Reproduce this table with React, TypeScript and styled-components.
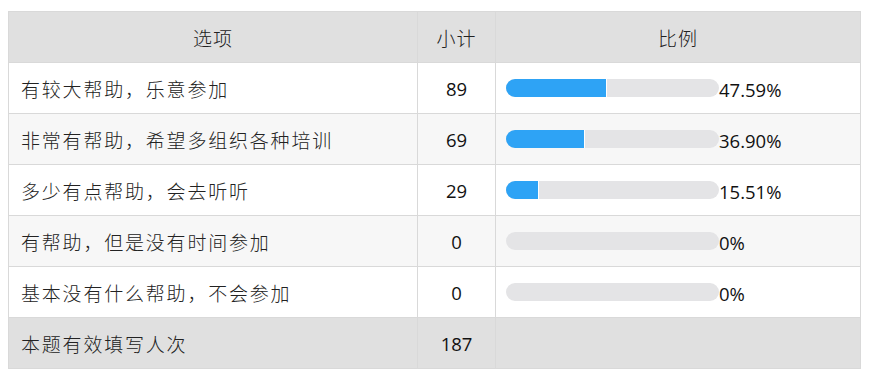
import styled, { createGlobalStyle } from 'styled-components';

const rows = [
  { label: '有较大帮助，乐意参加', count: 89, pct: '47.59%', value: 47.59 },
  { label: '非常有帮助，希望多组织各种培训', count: 69, pct: '36.90%', value: 36.9 },
  { label: '多少有点帮助，会去听听', count: 29, pct: '15.51%', value: 15.51 },
  { label: '有帮助，但是没有时间参加', count: 0, pct: '0%', value: 0 },
  { label: '基本没有什么帮助，不会参加', count: 0, pct: '0%', value: 0 },
];

const GlobalStyle = createGlobalStyle`
  body {
    margin: 0;
    background: #fff;
    font-family: "Open Sans", "Noto Sans CJK SC", sans-serif;
    color: #111;
  }
`;

const Page = styled.div`
  padding: 11px 10px 0 8px;
`;

const Table = styled.table`
  width: 852px;
  border-collapse: collapse;
  table-layout: fixed;
  font-size: 18.5px;

  td,
  th {
    border: 1px solid #d9d9d9;
    height: 50px;
    padding: 0;
  }
`;

const HeadCell = styled.th`
  background: #e0e0e0;
  font-weight: 300;
  text-align: center;
  font-family: "Noto Sans CJK SC", sans-serif;
  font-size: 19px;
  letter-spacing: 1px;
  color: #222;
`;

const Row = styled.tr<{ $alt?: boolean }>`
  background: ${(p) => (p.$alt ? '#f7f7f7' : '#fff')};
`;

const FootRow = styled.tr`
  background: #e0e0e0;
`;

const LabelCell = styled.td`
  padding-left: 12px !important;
  font-family: "Noto Sans CJK SC", sans-serif;
  font-weight: 300;
  font-size: 19px;
  letter-spacing: 1.8px;
  color: #222;
`;

const NumCell = styled.td`
  text-align: center;
`;

const BarCell = styled.td`
  padding-left: 10px !important;
`;

const BarWrap = styled.div`
  display: flex;
  align-items: center;
`;

const Track = styled.div`
  width: 213px;
  height: 18px;
  border-radius: 9px;
  background: #e4e4e6;
  overflow: hidden;
  flex-shrink: 0;
`;

const Fill = styled.div`
  height: 100%;
  background: #2ea3f5;
  border-right: 1px solid #fff;
  box-sizing: border-box;
`;

const Pct = styled.span`
  margin-top: 3px;
`;

export default function App() {
  return (
    <Page>
      <GlobalStyle />
      <Table>
        <colgroup>
          <col style={{ width: 409 }} />
          <col style={{ width: 78 }} />
          <col style={{ width: 365 }} />
        </colgroup>
        <thead>
          <tr>
            <HeadCell>选项</HeadCell>
            <HeadCell>小计</HeadCell>
            <HeadCell>比例</HeadCell>
          </tr>
        </thead>
        <tbody>
          {rows.map((r, i) => (
            <Row key={r.label} $alt={i % 2 === 1}>
              <LabelCell>{r.label}</LabelCell>
              <NumCell>{r.count}</NumCell>
              <BarCell>
                <BarWrap>
                  <Track>
                    {r.value > 0 && <Fill style={{ width: `${(r.value / 100) * 213}px` }} />}
                  </Track>
                  <Pct>{r.pct}</Pct>
                </BarWrap>
              </BarCell>
            </Row>
          ))}
          <FootRow>
            <LabelCell>本题有效填写人次</LabelCell>
            <NumCell>187</NumCell>
            <td />
          </FootRow>
        </tbody>
      </Table>
    </Page>
  );
}
